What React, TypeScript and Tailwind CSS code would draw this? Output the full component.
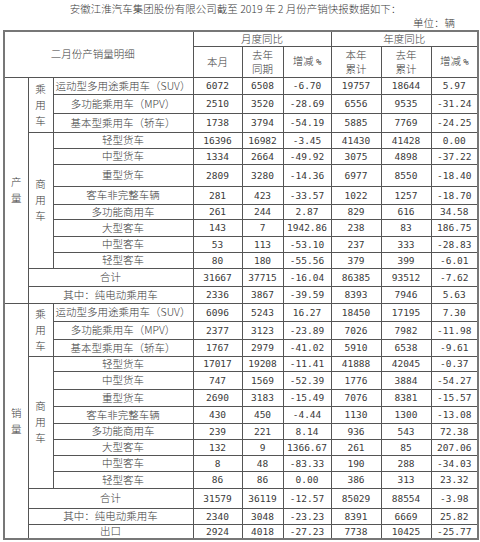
import React from "react"

type Row = {
    name: string
    h: string
    v: string[]
}

const cjk = "font-['Noto_Sans_CJK_SC','Noto_Sans',sans-serif] font-light"
const num = "font-['DejaVu_Sans_Mono','Liberation_Mono',monospace] font-normal"

const cell = "border border-[#555] p-0 text-center align-middle"
const txt = "text-[10.5px] leading-[12px]"
const two = "text-[10.5px] leading-[14px]"

// 产量
const prodCar: Row[] = [
    { name: "运动型多用途乘用车（SUV）", h: "h-[17px]", v: ["6072", "6508", "-6.70", "19757", "18644", "5.97"] },
    { name: "多功能乘用车（MPV）", h: "h-[19px]", v: ["2510", "3520", "-28.69", "6556", "9535", "-31.24"] },
    { name: "基本型乘用车（轿车）", h: "h-[19px]", v: ["1738", "3794", "-54.19", "5885", "7769", "-24.25"] },
]

const prodBiz: Row[] = [
    { name: "轻型货车", h: "h-[16px]", v: ["16396", "16982", "-3.45", "41430", "41428", "0.00"] },
    { name: "中型货车", h: "h-[16px]", v: ["1334", "2664", "-49.92", "3075", "4898", "-37.22"] },
    { name: "重型货车", h: "h-[22px]", v: ["2809", "3280", "-14.36", "6977", "8550", "-18.40"] },
    { name: "客车非完整车辆", h: "h-[18px]", v: ["281", "423", "-33.57", "1022", "1257", "-18.70"] },
    { name: "多功能商用车", h: "h-[15px]", v: ["261", "244", "2.87", "829", "616", "34.58"] },
    { name: "大型客车", h: "h-[17px]", v: ["143", "7", "1942.86", "238", "83", "186.75"] },
    { name: "中型客车", h: "h-[16px]", v: ["53", "113", "-53.10", "237", "333", "-28.83"] },
    { name: "轻型客车", h: "h-[16px]", v: ["80", "180", "-55.56", "379", "399", "-6.01"] },
]

const prodSum: Row[] = [
    { name: "合计", h: "h-[18px]", v: ["31667", "37715", "-16.04", "86385", "93512", "-7.62"] },
    { name: "其中：纯电动乘用车", h: "h-[17px]", v: ["2336", "3867", "-39.59", "8393", "7946", "5.63"] },
]

// 销量
const saleCar: Row[] = [
    { name: "运动型多用途乘用车（SUV）", h: "h-[18px]", v: ["6096", "5243", "16.27", "18450", "17195", "7.30"] },
    { name: "多功能乘用车（MPV）", h: "h-[18px]", v: ["2377", "3123", "-23.89", "7026", "7982", "-11.98"] },
    { name: "基本型乘用车（轿车）", h: "h-[17px]", v: ["1767", "2979", "-41.02", "5910", "6538", "-9.61"] },
]

const saleBiz: Row[] = [
    { name: "轻型货车", h: "h-[15px]", v: ["17017", "19208", "-11.41", "41888", "42045", "-0.37"] },
    { name: "中型货车", h: "h-[18px]", v: ["747", "1569", "-52.39", "1776", "3884", "-54.27"] },
    { name: "重型货车", h: "h-[17px]", v: ["2690", "3183", "-15.49", "7076", "8381", "-15.57"] },
    { name: "客车非完整车辆", h: "h-[17px]", v: ["430", "450", "-4.44", "1130", "1300", "-13.08"] },
    { name: "多功能商用车", h: "h-[16px]", v: ["239", "221", "8.14", "936", "543", "72.38"] },
    { name: "大型客车", h: "h-[16px]", v: ["132", "9", "1366.67", "261", "85", "207.06"] },
    { name: "中型客车", h: "h-[16px]", v: ["8", "48", "-83.33", "190", "288", "-34.03"] },
    { name: "轻型客车", h: "h-[17px]", v: ["86", "86", "0.00", "386", "313", "23.32"] },
]

const saleSum: Row[] = [
    { name: "合计", h: "h-[20px]", v: ["31579", "36119", "-12.57", "85029", "88554", "-3.98"] },
    { name: "其中：纯电动乘用车", h: "h-[16px]", v: ["2340", "3048", "-23.23", "8391", "6669", "25.82"] },
    { name: "出口", h: "h-[15px]", v: ["2924", "4018", "-27.23", "7738", "10425", "-25.77"] },
]

const Nums = ({ v }: { v: string[] }) => (
    <>
        {v.map((n, i) => (
            <td key={i} className={`${cell} ${num} text-[9.5px] leading-[11px]`}>{n}</td>
        ))}
    </>
)

const Vertical = ({ text, rows }: { text: string, rows: number }) => (
    <td rowSpan={rows} className={`${cell} text-[10.5px] leading-[16px]`}>
        {text.split("").map((c, i) => <div key={i}>{c}</div>)}
    </td>
)

const Section = ({ label, car, biz, sums }: { label: string, car: Row[], biz: Row[], sums: Row[] }) => {
    const total = car.length + biz.length + sums.length
    return (
        <>
            {car.map((r, i) => (
                <tr key={"c" + i} className={r.h}>
                    {i === 0 ? <Vertical text={label} rows={total} /> : null}
                    {i === 0 ? <Vertical text="乘用车" rows={car.length} /> : null}
                    <td className={`${cell} ${txt}`}>{r.name}</td>
                    <Nums v={r.v} />
                </tr>
            ))}
            {biz.map((r, i) => (
                <tr key={"b" + i} className={r.h}>
                    {i === 0 ? <Vertical text="商用车" rows={biz.length} /> : null}
                    <td className={`${cell} ${txt}`}>{r.name}</td>
                    <Nums v={r.v} />
                </tr>
            ))}
            {sums.map((r, i) => (
                <tr key={"s" + i} className={r.h}>
                    <td colSpan={2} className={`${cell} ${txt}`}>{r.name}</td>
                    <Nums v={r.v} />
                </tr>
            ))}
        </>
    )
}

const App = () => {
    return (
        <div className={`w-[480px] h-[542px] bg-white text-[#3a3a3a] pl-[3px] ${cjk}`}>
            <div className="h-[16px] pt-[2px] pr-[12px] text-center text-[10.5px] leading-[13px]">
                安徽江淮汽车集团股份有限公司截至 2019 年 2 月份产销快报数据如下：
            </div>
            <div className="h-[14px] pr-[25px] text-right text-[10.5px] leading-[14px]">单位：辆</div>

            <table className="table-fixed border-collapse w-[474px] border-2 border-[#777]">
                <colgroup>
                    <col className="w-[24px]" />
                    <col className="w-[25px]" />
                    <col className="w-[140px]" />
                    <col className="w-[49px]" />
                    <col className="w-[41px]" />
                    <col className="w-[48px]" />
                    <col className="w-[50px]" />
                    <col className="w-[50px]" />
                    <col className="w-[47px]" />
                </colgroup>
                <tbody>
                    <tr className="h-[15px]">
                        <td colSpan={3} rowSpan={2} className={`${cell} ${txt} pr-[12px]`}>二月份产销量明细</td>
                        <td colSpan={3} className={`${cell} ${txt}`}>月度同比</td>
                        <td colSpan={3} className={`${cell} ${txt}`}>年度同比</td>
                    </tr>
                    <tr className="h-[31px]">
                        <td className={`${cell} ${txt}`}>本月</td>
                        <td className={`${cell} ${two}`}>去年<br />同期</td>
                        <td className={`${cell} ${txt}`}>增减 <span className={`${num} text-[9px]`}>%</span></td>
                        <td className={`${cell} ${two}`}>本年<br />累计</td>
                        <td className={`${cell} ${two}`}>去年<br />累计</td>
                        <td className={`${cell} ${txt}`}>增减 <span className={`${num} text-[9px]`}>%</span></td>
                    </tr>
                    <Section label="产量" car={prodCar} biz={prodBiz} sums={prodSum} />
                    <Section label="销量" car={saleCar} biz={saleBiz} sums={saleSum} />
                </tbody>
            </table>
        </div>
    )
}

export default App
